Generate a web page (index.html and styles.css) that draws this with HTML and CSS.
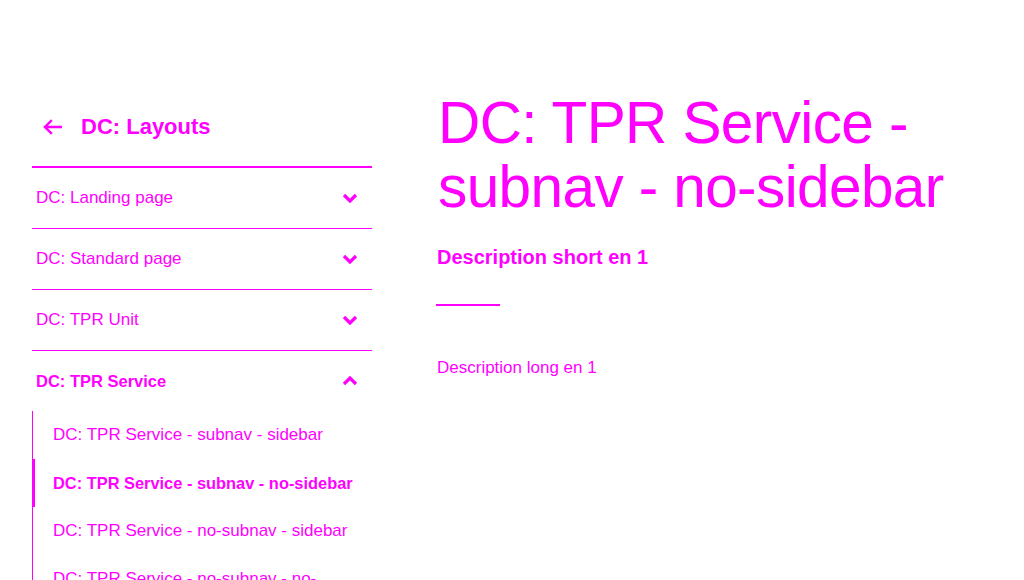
FILE: index.html
```
<!DOCTYPE html>
<html lang="en">
<head>
<meta charset="utf-8">
<title>DC: TPR Service - subnav - no-sidebar</title>
<link rel="stylesheet" href="styles.css">
</head>
<body>
<div class="page">
  <nav class="subnav">
    <a class="subnav-back" href="#">
      <svg class="back-icon" width="20" height="16" viewBox="0 0 20 16" aria-hidden="true"><path d="M19 8H3M9 2L3 8l6 6" fill="none" stroke="#ff00ff" stroke-width="2.4" stroke-linecap="square"/></svg>
      <span>DC: Layouts</span>
    </a>
    <ul class="subnav-list">
      <li class="subnav-row"><span>DC: Landing page</span><svg class="chev" width="16" height="10" viewBox="0 0 16 10"><path d="M2 2l6 6 6-6" fill="none" stroke="#ff00ff" stroke-width="3.2"/></svg></li>
      <li class="subnav-row"><span>DC: Standard page</span><svg class="chev" width="16" height="10" viewBox="0 0 16 10"><path d="M2 2l6 6 6-6" fill="none" stroke="#ff00ff" stroke-width="3.2"/></svg></li>
      <li class="subnav-row"><span>DC: TPR Unit</span><svg class="chev" width="16" height="10" viewBox="0 0 16 10"><path d="M2 2l6 6 6-6" fill="none" stroke="#ff00ff" stroke-width="3.2"/></svg></li>
      <li class="subnav-group">
        <div class="subnav-row open"><span>DC: TPR Service</span><svg class="chev" width="16" height="10" viewBox="0 0 16 10"><path d="M2 8l6-6 6 6" fill="none" stroke="#ff00ff" stroke-width="3.2"/></svg></div>
        <ul class="subnav-sub">
          <li class="sub-item">DC: TPR Service - subnav - sidebar</li>
          <li class="sub-item active">DC: TPR Service - subnav - no-sidebar</li>
          <li class="sub-item">DC: TPR Service - no-subnav - sidebar</li>
          <li class="sub-item">DC: TPR Service - no-subnav - no-sidebar</li>
        </ul>
      </li>
    </ul>
  </nav>
  <main class="content">
    <h1 class="title">DC: TPR Service - subnav - no-sidebar</h1>
    <p class="lead">Description short en 1</p>
    <hr class="rule">
    <p class="body-text">Description long en 1</p>
  </main>
</div>
</body>
</html>
```
FILE: styles.css
```
* { box-sizing: border-box; }
html, body { margin: 0; padding: 0; background: #fff; }
body {
  font-family: "Liberation Sans", Arial, sans-serif;
  color: #ff00ff;
  overflow: hidden;
}
.page {
  display: flex;
  gap: 66px;
  padding: 91px 0 0 32px;
}
.subnav { width: 340px; flex: none; }
.subnav-back {
  display: flex;
  align-items: center;
  gap: 19px;
  padding: 23px 0 26px 10px;
  border-bottom: 2px solid #ff00ff;
  color: #ff00ff;
  text-decoration: none;
  font-weight: 700;
  font-size: 22px;
  line-height: 26px;
}
.back-icon { display: block; }
.subnav-list, .subnav-sub { list-style: none; margin: 0; padding: 0; }
.subnav-row {
  display: flex;
  align-items: center;
  justify-content: space-between;
  height: 61px;
  padding: 0 14px 0 4px;
  border-bottom: 1px solid #ff00ff;
  font-size: 17px;
  line-height: 20px;
}
.subnav-row.open { font-weight: 700; font-size: 16.5px; height: 60px; border-bottom: none; }
.chev { display: block; }
.subnav-sub { border-left: 1px solid #ff00ff; }
.sub-item {
  padding: 14px 14px 14px 20px;
  font-size: 17px;
  line-height: 20px;
}
.sub-item.active {
  font-weight: 700;
  font-size: 16.4px;
  box-shadow: inset 3px 0 0 #ff00ff;
  margin-left: -1px;
  padding-left: 21px;
  padding-right: 4px;
}
.content { width: 560px; }
.title {
  margin: 0;
  font-weight: 400;
  font-size: 58.5px;
  letter-spacing: -0.6px;
  line-height: 64px;
}
.lead {
  margin: 26px 0 0 -1px;
  font-weight: 700;
  font-size: 20px;
  line-height: 24px;
}
.rule {
  margin: 35px 0 0 -2px;
  width: 64px;
  border: 0;
  border-top: 2px solid #ff00ff;
}
.body-text {
  margin: 52px 0 0 -1px;
  font-size: 17px;
  line-height: 20px;
}
```
